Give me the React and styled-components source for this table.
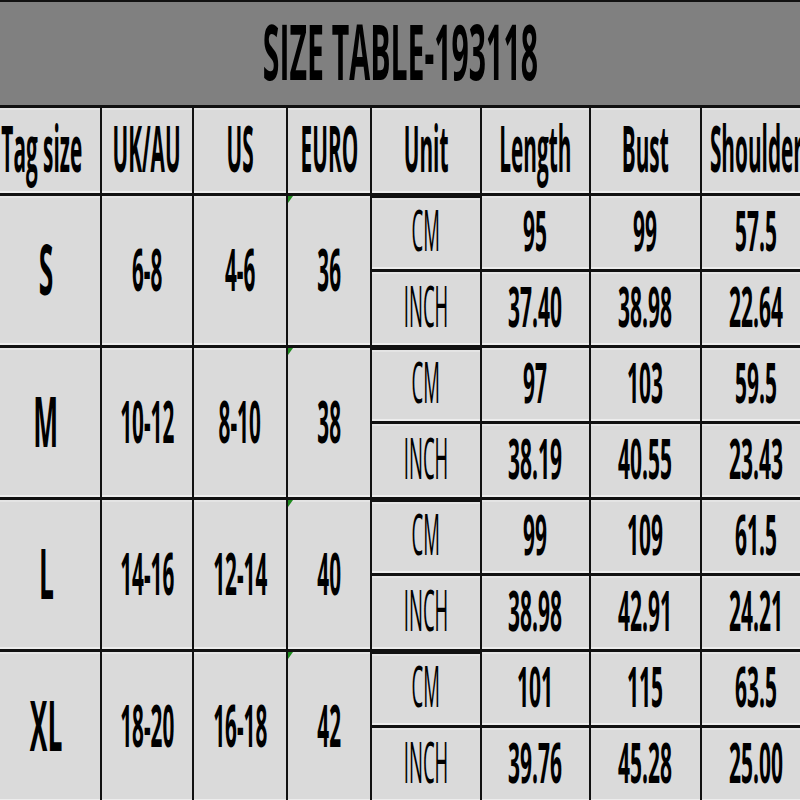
import React from 'react';
import styled, { createGlobalStyle, css } from 'styled-components';

const GlobalStyle = createGlobalStyle`
  html, body {
    margin: 0;
    padding: 0;
    background: #000;
  }
`;

const Page = styled.div`
  width: 800px;
  height: 800px;
  overflow: hidden;
  background: #000;
  font-family: "Open Sans", "DejaVu Sans", sans-serif;
  color: #000;
`;

const TitleBar = styled.div`
  height: 103px;
  border-top: 2px solid #111;
  border-bottom: 3px solid #111;
  background: #808080;
  display: flex;
  align-items: center;
  justify-content: center;
`;

const Squeezed = styled.span`
  display: inline-block;
  white-space: nowrap;
  line-height: 1;
  font-size: ${p => p.$size}px;
  font-weight: ${p => (p.$light ? 400 : 700)};
  transform: translateY(-3px) scale(${p => p.$sx}, 1.6);
`;

const Grid = styled.div`
  width: 810px;
  display: grid;
  grid-template-columns: 100px 90px 92px 82px 108px 107px 109px 108px;
  grid-template-rows: 85px repeat(8, 73px);
  column-gap: 2px;
  row-gap: 3px;
  background: #111;
`;

const Cell = styled.div`
  background: #dadada;
  box-shadow: inset 0 -2px 0 #ededed, inset 0 2px 0 #e4e4e4;
  display: flex;
  align-items: center;
  justify-content: center;
  position: relative;
  ${p => p.$span && css`grid-row: span 2;`}
  ${p => p.$shift && css`padding-right: ${p.$shift}px;`}
  ${p => p.$thick && css`
    box-shadow: inset 0 -2px 0 #ededed, inset 0 2px 0 #111, inset 0 4px 0 #e4e4e4;
  `}
  ${p => p.$flag && css`
    &::before {
      content: "";
      position: absolute;
      left: 0;
      top: 0;
      border-top: 7px solid #1f8a1f;
      border-right: 5px solid transparent;
    }
  `}
`;

const headers = ['Tag size', 'UK/AU', 'US', 'EURO', 'Unit', 'Length', 'Bust', 'Shoulder'];

const groups = [
  { tag: 'S', uk: '6-8', us: '4-6', eu: '36', cm: ['95', '99', '57.5'], inch: ['37.40', '38.98', '22.64'] },
  { tag: 'M', uk: '10-12', us: '8-10', eu: '38', cm: ['97', '103', '59.5'], inch: ['38.19', '40.55', '23.43'] },
  { tag: 'L', uk: '14-16', us: '12-14', eu: '40', cm: ['99', '109', '61.5'], inch: ['38.98', '42.91', '24.21'] },
  { tag: 'XL', uk: '18-20', us: '16-18', eu: '42', cm: ['101', '115', '63.5'], inch: ['39.76', '45.28', '25.00'] },
];

const Num = ({ children }) => (
  <Squeezed $size={35} $sx={0.6}>{children}</Squeezed>
);

const Left = ({ children }) => (
  <Squeezed $size={37} $sx={0.56}>{children}</Squeezed>
);

const Unit = ({ children }) => (
  <Squeezed $size={35} $sx={0.53} $light>{children}</Squeezed>
);

export default function App() {
  return (
    <Page>
      <GlobalStyle />
      <TitleBar>
        <Squeezed $size={48} $sx={0.63}>SIZE TABLE-193118</Squeezed>
      </TitleBar>
      <Grid>
        {headers.map((h, i) => (
          <Cell key={h} $shift={i === 0 ? 16 : 0}>
            <Squeezed $size={40} $sx={0.52}>{h}</Squeezed>
          </Cell>
        ))}
        {groups.map(g => (
          <React.Fragment key={g.tag}>
            <Cell $span $shift={8}>
              <Squeezed $size={44} $sx={0.6}>{g.tag}</Squeezed>
            </Cell>
            <Cell $span><Left>{g.uk}</Left></Cell>
            <Cell $span><Left>{g.us}</Left></Cell>
            <Cell $span $flag><Left>{g.eu}</Left></Cell>
            <Cell $thick><Unit>CM</Unit></Cell>
            {g.cm.map((v, i) => <Cell key={'c' + i}><Num>{v}</Num></Cell>)}
            <Cell><Unit>INCH</Unit></Cell>
            {g.inch.map((v, i) => <Cell key={'i' + i}><Num>{v}</Num></Cell>)}
          </React.Fragment>
        ))}
      </Grid>
    </Page>
  );
}
